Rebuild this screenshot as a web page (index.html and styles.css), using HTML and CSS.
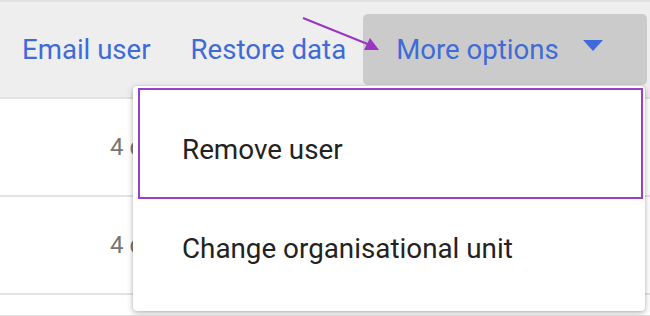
FILE: index.html
```html
<!DOCTYPE html>
<html>
<head>
<meta charset="utf-8">
<link rel="stylesheet" href="styles.css">
</head>
<body>
<div class="page">
  <div class="topline"></div>
  <div class="toolbar">
    <span class="action action-email">Email user</span>
    <span class="action action-restore">Restore data</span>
    <div class="more-btn">
      <span class="action">More options</span>
      <svg class="caret" width="20" height="11" viewBox="0 0 20 11"><polygon points="0,0 20,0 10,11" fill="#3e6bd9"/></svg>
    </div>
  </div>
  <div class="rows">
    <div class="row"><span class="cell">4 days ago</span></div>
    <div class="row"><span class="cell">4 days ago</span></div>
    <div class="row row-last"></div>
  </div>

  <svg class="pointer" width="100" height="50" viewBox="0 0 100 50">
    <line x1="3" y1="18" x2="70" y2="45" stroke="#9a35c2" stroke-width="2"/>
    <polygon points="79,50 64,50 70,38" fill="#9a35c2"/>
  </svg>

  <div class="menu">
    <div class="menu-item selected">Remove user</div>
    <div class="menu-item menu-item-second">Change organisational unit</div>
  </div>
</div>
</body>
</html>
```
FILE: styles.css
```css
html, body {
  margin: 0;
  padding: 0;
  background: #ffffff;
}
body {
  font-family: Roboto, "Liberation Sans", sans-serif;
  width: 650px;
  height: 316px;
  overflow: hidden;
}
.page {
  position: relative;
  width: 650px;
  height: 316px;
  overflow: hidden;
}
.topline {
  height: 2px;
  background: #e2e2e2;
}
.toolbar {
  height: 95px;
  background: #eeeeee;
  border-bottom: 2px solid #e2e2e2;
  display: flex;
  align-items: center;
  padding-left: 22px;
}
.action {
  font-size: 27.6px;
  color: #3f6bd8;
  white-space: nowrap;
}
.action-email {
  margin-right: 40px;
}
.action-restore {
  margin-right: 17px;
}
.more-btn {
  width: 284px;
  height: 71px;
  box-sizing: border-box;
  background: #cbcbcb;
  border-radius: 5px;
  display: flex;
  align-items: center;
  padding-left: 33px;
}
.caret {
  margin-left: 24px;
  margin-top: -8px;
}
.rows {
  display: flex;
  flex-direction: column;
}
.row {
  height: 96px;
  border-bottom: 2px solid #e4e4e4;
  display: flex;
  align-items: center;
  padding-left: 110px;
}
.row-last {
  height: 20px;
}
.cell {
  font-size: 24px;
  color: #757575;
  white-space: nowrap;
}
.pointer {
  position: absolute;
  left: 300px;
  top: 0;
}
.menu {
  position: absolute;
  left: 133px;
  top: 86px;
  width: 512px;
  height: 225px;
  box-sizing: border-box;
  background: #ffffff;
  border-radius: 4px;
  box-shadow: 0 2px 6px rgba(0,0,0,0.28), 0 0 2px rgba(0,0,0,0.12);
  padding: 2px 2px 0 5px;
  display: flex;
  flex-direction: column;
}
.menu-item {
  font-size: 27.8px;
  color: #222222;
  display: flex;
  align-items: center;
  padding-left: 44px;
  padding-top: 12px;
  height: 82px;
  box-sizing: border-box;
  white-space: nowrap;
}
.menu-item-second {
  padding-top: 17px;
}
.menu-item.selected {
  height: 111px;
  border: 2px solid #9a3fc6;
  padding-left: 42px;
}
```
